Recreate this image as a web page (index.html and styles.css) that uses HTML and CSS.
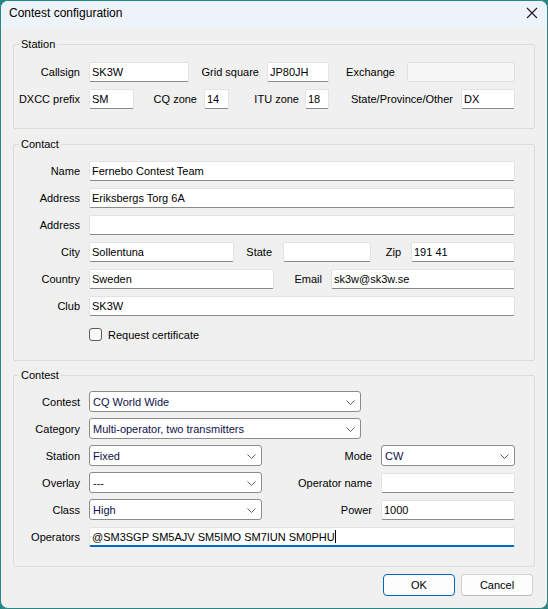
FILE: index.html
```html
<!DOCTYPE html>
<html lang="en">
<head>
    <meta charset="UTF-8">
    <title>Contest configuration</title>
    <link rel="stylesheet" href="styles.css">
</head>
<body>
<div class="window">
    <div class="titlebar">
        <span class="title">Contest configuration</span>
        <svg class="close" width="12" height="12" viewBox="0 0 12 12">
            <path d="M1 1 L11 11 M11 1 L1 11" stroke="#1a1a1a" stroke-width="1.1" fill="none"/>
        </svg>
    </div>

    <div class="content">
        <fieldset class="group station">
            <legend>Station</legend>
            <div class="row">
                <label class="lbl first">Callsign</label>
                <input class="txt call" type="text" value="SK3W">
                <label class="lbl grid-l">Grid square</label>
                <input class="txt grid" type="text" value="JP80JH">
                <label class="lbl exch-l">Exchange</label>
                <input class="txt exch" type="text" disabled>
            </div>
            <div class="row">
                <label class="lbl first">DXCC prefix</label>
                <input class="txt dxcc" type="text" value="SM">
                <label class="lbl cq-l">CQ zone</label>
                <input class="txt cq" type="text" value="14">
                <label class="lbl itu-l">ITU zone</label>
                <input class="txt itu" type="text" value="18">
                <label class="lbl spo-l">State/Province/Other</label>
                <input class="txt spo" type="text" value="DX">
            </div>
        </fieldset>

        <fieldset class="group contact">
            <legend>Contact</legend>
            <div class="row">
                <label class="lbl first">Name</label>
                <input class="txt wide" type="text" value="Fernebo Contest Team">
            </div>
            <div class="row">
                <label class="lbl first">Address</label>
                <input class="txt wide" type="text" value="Eriksbergs Torg 6A">
            </div>
            <div class="row">
                <label class="lbl first">Address</label>
                <input class="txt wide" type="text" value="">
            </div>
            <div class="row">
                <label class="lbl first">City</label>
                <input class="txt city" type="text" value="Sollentuna">
                <label class="lbl state-l">State</label>
                <input class="txt state" type="text" value="">
                <label class="lbl zip-l">Zip</label>
                <input class="txt zip" type="text" value="191 41">
            </div>
            <div class="row">
                <label class="lbl first">Country</label>
                <input class="txt country" type="text" value="Sweden">
                <label class="lbl email-l">Email</label>
                <input class="txt email" type="text" value="sk3w@sk3w.se">
            </div>
            <div class="row">
                <label class="lbl first">Club</label>
                <input class="txt wide" type="text" value="SK3W">
            </div>
            <div class="check-row">
                <span class="checkbox"></span>
                <span class="check-text">Request certificate</span>
            </div>
        </fieldset>

        <fieldset class="group contest">
            <legend>Contest</legend>
            <div class="row tall">
                <label class="lbl first">Contest</label>
                <div class="combo long"><span>CQ World Wide</span><svg class="chev" width="9" height="5" viewBox="0 0 9 5"><path d="M0.5 0.5 L4.5 4.5 L8.5 0.5" stroke="#606060" fill="none"/></svg></div>
            </div>
            <div class="row tall">
                <label class="lbl first">Category</label>
                <div class="combo long"><span>Multi-operator, two transmitters</span><svg class="chev" width="9" height="5" viewBox="0 0 9 5"><path d="M0.5 0.5 L4.5 4.5 L8.5 0.5" stroke="#606060" fill="none"/></svg></div>
            </div>
            <div class="row tall">
                <label class="lbl first">Station</label>
                <div class="combo short"><span>Fixed</span><svg class="chev" width="9" height="5" viewBox="0 0 9 5"><path d="M0.5 0.5 L4.5 4.5 L8.5 0.5" stroke="#606060" fill="none"/></svg></div>
                <label class="lbl right-l">Mode</label>
                <div class="combo mode"><span>CW</span><svg class="chev" width="9" height="5" viewBox="0 0 9 5"><path d="M0.5 0.5 L4.5 4.5 L8.5 0.5" stroke="#606060" fill="none"/></svg></div>
            </div>
            <div class="row tall">
                <label class="lbl first">Overlay</label>
                <div class="combo short"><span>---</span><svg class="chev" width="9" height="5" viewBox="0 0 9 5"><path d="M0.5 0.5 L4.5 4.5 L8.5 0.5" stroke="#606060" fill="none"/></svg></div>
                <label class="lbl right-l">Operator name</label>
                <input class="txt opname" type="text" value="">
            </div>
            <div class="row tall">
                <label class="lbl first">Class</label>
                <div class="combo short"><span>High</span><svg class="chev" width="9" height="5" viewBox="0 0 9 5"><path d="M0.5 0.5 L4.5 4.5 L8.5 0.5" stroke="#606060" fill="none"/></svg></div>
                <label class="lbl right-l">Power</label>
                <input class="txt opname" type="text" value="1000">
            </div>
            <div class="row tall">
                <label class="lbl first">Operators</label>
                <div class="txt wide focused">@SM3SGP SM5AJV SM5IMO SM7IUN SM0PHU<span class="caret"></span></div>
            </div>
        </fieldset>

        <div class="buttons">
            <button class="btn ok">OK</button>
            <button class="btn">Cancel</button>
        </div>
    </div>
</div>
</body>
</html>
```

FILE: styles.css
```css
* {
    box-sizing: border-box;
}
html, body {
    margin: 0;
    height: 100%;
    background: #2a8585;
}
body {
    font-family: "Liberation Sans", Arial, sans-serif;
    font-size: 11px;
    color: #000;
}
.window {
    height: 609px;
    border: 1px solid #2a8585;
    border-radius: 8px;
    overflow: hidden;
    background: #f0f0f0;
}
.titlebar {
    height: 25px;
    background: #eef3f9;
    display: flex;
    align-items: center;
    justify-content: space-between;
    padding: 0 9px 2px 8px;
}
.title {
    font-size: 12px;
}
.close {
    margin-top: 1px;
}
.content {
    padding: 12px 12px 0 12px;
}

/* group boxes */
.group {
    margin: 0;
    border: 1px solid #dcdcdc;
    border-radius: 2px;
    padding: 11px 0 19px 0;
    display: flex;
    flex-direction: column;
    gap: 7px;
}
.group legend {
    margin-left: 5px;
    padding: 0 2px;
    line-height: 13px;
}
.contact {
    margin-top: 9px;
    padding-top: 10px;
    padding-bottom: 19px;
}
.contest {
    margin-top: 8px;
    padding-top: 9px;
    gap: 6px;
}

.row {
    display: flex;
    align-items: center;
    height: 20px;
}
.row.tall {
    height: 21px;
}
.lbl {
    flex: none;
    text-align: right;
    white-space: nowrap;
}
.lbl.first { width: 66px; margin-right: 9px; }
.grid-l { width: 70px; margin-right: 8px; }
.exch-l { width: 66px; margin-right: 12px; }
.cq-l { width: 63px; margin-right: 7px; }
.itu-l { width: 70px; margin-right: 6px; }
.spo-l { width: 124px; margin-right: 8px; }
.state-l { width: 38px; margin-right: 11px; }
.zip-l { width: 30px; margin-right: 10px; }
.email-l { width: 48px; margin-right: 9px; }
.right-l { width: 110px; margin-right: 9px; }

/* text boxes */
.txt {
    flex: none;
    height: 20px;
    margin: 0;
    padding: 0 2px;
    font-family: inherit;
    font-size: 11px;
    color: #000;
    background: #fff;
    border: 1px solid #e3e3e3;
    border-bottom-color: #8a8a8a;
    border-radius: 2px;
    outline: none;
}
.txt:disabled {
    background: #f7f7f7;
    border-color: #e0e0e0;
}
.call { width: 100px; }
.grid { width: 62px; }
.exch { width: 108px; }
.dxcc { width: 45px; }
.cq { width: 25px; }
.itu { width: 24px; }
.spo { width: 54px; }
.wide { width: 426px; }
.city { width: 145px; }
.state { width: 88px; }
.zip { width: 104px; }
.country { width: 185px; }
.email { width: 184px; }
.opname { width: 134px; }

.focused {
    display: flex;
    align-items: center;
    border-bottom: 2px solid #0067c0;
    padding-top: 1px;
}
.caret {
    display: inline-block;
    width: 1px;
    height: 13px;
    background: #000;
}

/* combo boxes */
.combo {
    flex: none;
    height: 21px;
    display: flex;
    align-items: center;
    justify-content: space-between;
    padding: 0 5px 0 3px;
    background: #fff;
    border: 1px solid #8c8c8c;
    border-radius: 3px;
    color: #10104a;
}
.combo.long { width: 272px; }
.combo.short { width: 173px; }
.combo.mode { width: 134px; }
.chev {
    margin-top: 1px;
}

/* checkbox */
.check-row {
    display: flex;
    align-items: center;
    height: 13px;
    margin-top: 5px;
    padding-left: 75px;
}
.checkbox {
    width: 13px;
    height: 13px;
    border: 1px solid #5c5c5c;
    border-radius: 3px;
    background: #f9f9f9;
    margin-right: 6px;
}

/* dialog buttons */
.buttons {
    display: flex;
    justify-content: flex-end;
    gap: 6px;
    margin-top: 7px;
    padding-right: 2px;
}
.btn {
    width: 72px;
    height: 22px;
    font-family: inherit;
    font-size: 11px;
    color: #000;
    background: #fdfdfd;
    border: 1px solid #d0d0d0;
    border-bottom-color: #b8b8b8;
    border-radius: 4px;
    padding: 0;
}
.btn.ok {
    border: 1px solid #0067c0;
}
```
